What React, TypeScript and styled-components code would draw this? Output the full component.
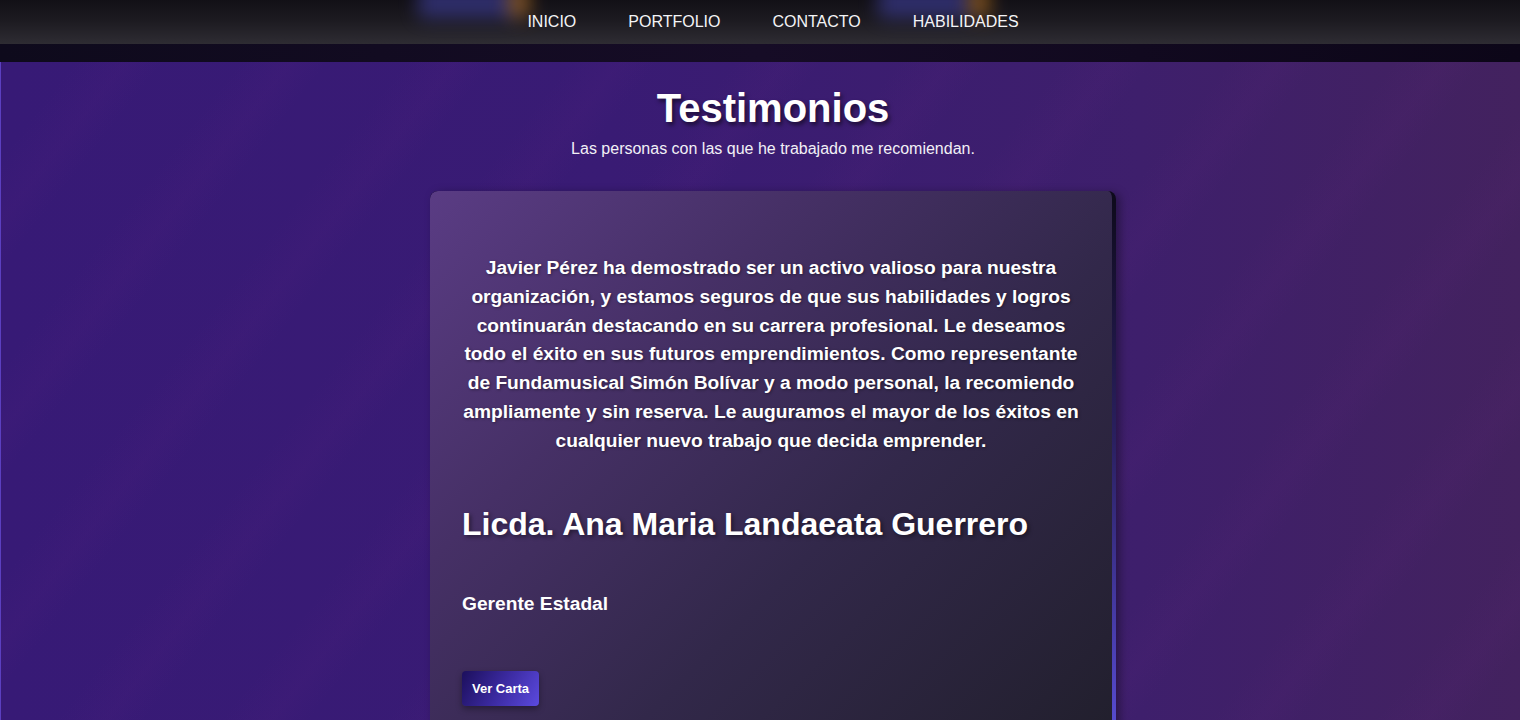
import React from "react";
import styled, { createGlobalStyle } from "styled-components";

const Global = createGlobalStyle`
  html, body { margin: 0; padding: 0; }
  body {
    font-family: "Liberation Sans", Arial, sans-serif;
    background: #381a74;
    color: #fff;
    overflow: hidden;
  }
`;

const Page = styled.div`
  min-height: 720px;
  height: 720px;
  overflow: hidden;
  display: flex;
  flex-direction: column;
`;

const Header = styled.header`
  position: relative;
  height: 44px;
  flex: none;
  background: linear-gradient(180deg, #121016 0%, #1c1a20 45%, #2e2c33 100%);
  overflow: hidden;
  display: flex;
  justify-content: center;
  padding-left: 26px;
`;

const Blob = styled.div<{ $x: number; $w: number; $c: string }>`
  position: absolute;
  top: -14px;
  left: ${(p) => p.$x}px;
  width: ${(p) => p.$w}px;
  height: 32px;
  border-radius: 6px;
  background: ${(p) => p.$c};
  filter: blur(9px);
  opacity: 0.7;
`;

const Nav = styled.nav`
  position: relative;
  display: flex;
  align-items: center;
  gap: 52px;
`;

const NavLink = styled.a`
  font-size: 16px;
  color: #f4f4f6;
  text-decoration: none;
`;

const Band = styled.div`
  height: 18px;
  flex: none;
  background: linear-gradient(90deg, #0e0a1c 0%, #160c26 50%, #0c0618 100%);
`;

const Main = styled.main`
  flex: 1;
  position: relative;
  border-left: 1px solid #5b3fc0;
  background:
    repeating-linear-gradient(
      -52deg,
      rgba(255, 255, 255, 0) 0px,
      rgba(255, 255, 255, 0) 60px,
      rgba(120, 40, 140, 0.06) 90px,
      rgba(255, 255, 255, 0) 130px
    ),
    linear-gradient(90deg, #371a76 0%, #391b74 40%, #3e1f6c 75%, #43225f 100%);
  display: flex;
  flex-direction: column;
  align-items: center;
  padding-left: 25px;
  padding-top: 23px;
`;

const Title = styled.h1`
  margin: 0;
  font-size: 40px;
  line-height: 46px;
  font-weight: 700;
  color: #fff;
  text-shadow: 2px 3px 4px rgba(0, 0, 0, 0.55);
`;

const Subtitle = styled.p`
  margin: 9px 0 0;
  font-size: 16px;
  line-height: 18px;
  color: #f2f0f6;
`;

const Card = styled.section`
  margin-top: 33px;
  width: 618px;
  box-sizing: content-box;
  padding: 63px 32px 40px;
  border-radius: 8px 8px 0 0;
  border-right: 4px solid transparent;
  background:
    linear-gradient(135deg, #5a3c84 0%, #463066 30%, #32284a 60%, #211f2c 100%) padding-box,
    linear-gradient(180deg, #0d0a1a 0%, #2a2060 45%, #5a4ed8 100%) border-box;
  box-shadow: 4px 2px 10px rgba(0, 0, 0, 0.35);
  display: flex;
  flex-direction: column;
  align-items: flex-start;
`;

const Quote = styled.p`
  margin: 0;
  align-self: stretch;
  text-align: center;
  font-size: 19.2px;
  line-height: 28.8px;
  font-weight: 700;
  color: #fff;
  text-shadow: 1px 1px 3px rgba(0, 0, 0, 0.4);
`;

const Name = styled.h2`
  margin: 50px 0 0;
  font-size: 32px;
  line-height: 37px;
  font-weight: 700;
  color: #fff;
  text-shadow: 2px 2px 4px rgba(0, 0, 0, 0.45);
`;

const Role = styled.h3`
  margin: 49px 0 0;
  font-size: 19.2px;
  line-height: 23px;
  font-weight: 700;
  color: #fff;
`;

const Button = styled.button`
  margin-top: 56px;
  padding: 10px 10px;
  border: none;
  border-radius: 4px;
  font-family: "Liberation Sans", Arial, sans-serif;
  font-size: 13px;
  line-height: 15px;
  font-weight: 700;
  color: #fff;
  background: linear-gradient(120deg, #1c0f5c 0%, #3b2aa0 50%, #5b4ade 100%);
  box-shadow: 0 3px 6px rgba(0, 0, 0, 0.35);
  cursor: pointer;
`;

export default function App() {
  return (
    <>
      <Global />
      <Page>
        <Header>
          <Blob $x={418} $w={100} $c="#3a3a8e" />
          <Blob $x={508} $w={22} $c="#a06418" />
          <Blob $x={878} $w={95} $c="#3a3a8e" />
          <Blob $x={968} $w={22} $c="#a06418" />
          <Nav>
            <NavLink href="#">INICIO</NavLink>
            <NavLink href="#">PORTFOLIO</NavLink>
            <NavLink href="#">CONTACTO</NavLink>
            <NavLink href="#">HABILIDADES</NavLink>
          </Nav>
        </Header>
        <Band />
        <Main>
          <Title>Testimonios</Title>
          <Subtitle>Las personas con las que he trabajado me recomiendan.</Subtitle>
          <Card>
            <Quote>
              Javier Pérez ha demostrado ser un activo valioso para nuestra organización, y estamos
              seguros de que sus habilidades y logros continuarán destacando en su carrera
              profesional. Le deseamos todo el éxito en sus futuros emprendimientos. Como
              representante de Fundamusical Simón Bolívar y a modo personal, la recomiendo
              ampliamente y sin reserva. Le auguramos el mayor de los éxitos en cualquier nuevo
              trabajo que decida emprender.
            </Quote>
            <Name>Licda. Ana Maria Landaeata Guerrero</Name>
            <Role>Gerente Estadal</Role>
            <Button>Ver Carta</Button>
          </Card>
        </Main>
      </Page>
    </>
  );
}
